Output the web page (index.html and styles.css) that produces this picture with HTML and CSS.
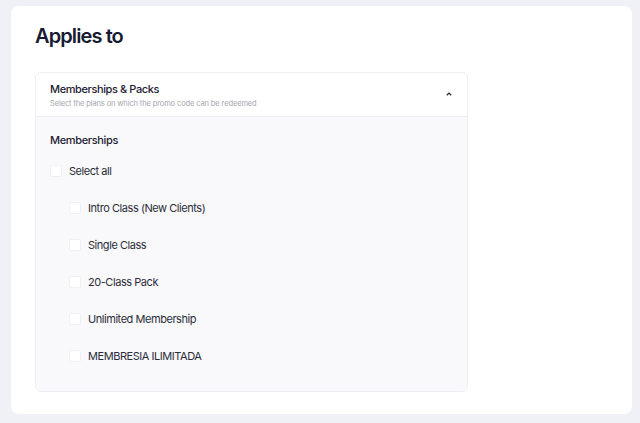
FILE: index.html
```html
<!DOCTYPE html>
<html lang="en">
<head>
    <meta charset="UTF-8">
    <meta name="viewport" content="width=device-width, initial-scale=1.0">
    <title>Applies to</title>
    <link rel="stylesheet" href="styles.css">
</head>
<body>

    <div class="card">
        <h1>Applies to</h1>

        <!-- Plans accordion -->
        <div class="accordion">
            <div class="accordion-header">
                <div>
                    <div class="accordion-title">Memberships &amp; Packs</div>
                    <div class="accordion-sub">Select the plans on which the promo code can be redeemed</div>
                </div>
                <svg class="chevron" width="8" height="6" viewBox="0 0 8 6">
                    <path d="M1.8 4.3 L4 2.1 L6.2 4.3" fill="none" stroke="#2a2d3a" stroke-width="1.3"/>
                </svg>
            </div>

            <div class="accordion-body">
                <div class="group-title">Memberships</div>
                <label class="check">
                    <span class="box"></span>Select all
                </label>
                <div class="plans">
                    <label class="check"><span class="box"></span>Intro Class (New Clients)</label>
                    <label class="check"><span class="box"></span>Single Class</label>
                    <label class="check"><span class="box"></span>20-Class Pack</label>
                    <label class="check"><span class="box"></span>Unlimited Membership</label>
                    <label class="check"><span class="box"></span>MEMBRESIA ILIMITADA</label>
                </div>
            </div>
        </div>
    </div>

</body>
</html>
```
FILE: styles.css
```css
* {
    margin: 0;
    padding: 0;
    box-sizing: border-box;
}

body {
    font-family: Inter, 'Noto Sans', sans-serif;
    background-color: #f0f1f6;
    color: #1e2130;
    padding: 6px 8px 9px 11px;
}

.card {
    background-color: #fff;
    border-radius: 8px;
    height: 408px;
    padding: 18px 24px;
}

h1 {
    font-size: 20px;
    font-weight: 600;
    color: #161a33;
    letter-spacing: -0.9px;
    line-height: 24px;
    margin-bottom: 24px;
}

.accordion {
    width: 433px;
    border: 1px solid #eceef2;
    border-radius: 6px;
    overflow: hidden;
}

.accordion-header {
    display: flex;
    align-items: center;
    justify-content: space-between;
    padding: 8px 14px 6px 14px;
    background-color: #fff;
    border-bottom: 1px solid #eceef2;
}

.accordion-title {
    font-size: 11px;
    font-weight: 500;
    color: #1e2130;
    letter-spacing: -0.4px;
    line-height: 16px;
}

.accordion-sub {
    font-size: 7.5px;
    color: #a3a6ae;
    letter-spacing: -0.12px;
    line-height: 12px;
    margin-top: 1px;
}

.chevron {
    margin-top: -3px;
}

.accordion-body {
    background-color: #f9f9fb;
    padding: 15px 14px 29px 14px;
}

.group-title {
    font-size: 11px;
    font-weight: 500;
    color: #1e2130;
    letter-spacing: -0.35px;
    line-height: 16px;
    margin-bottom: 17px;
}

.check {
    display: flex;
    align-items: center;
    gap: 7px;
    font-size: 11px;
    color: #2a2d3a;
    letter-spacing: -0.45px;
    height: 12px;
    margin-bottom: 25px;
}

.plans .check:last-child {
    margin-bottom: 0;
}

.box {
    width: 12px;
    height: 12px;
    border: 1px solid #eef0f3;
    border-radius: 2px;
    background-color: #fff;
}

.plans {
    padding-left: 19px;
}
```
